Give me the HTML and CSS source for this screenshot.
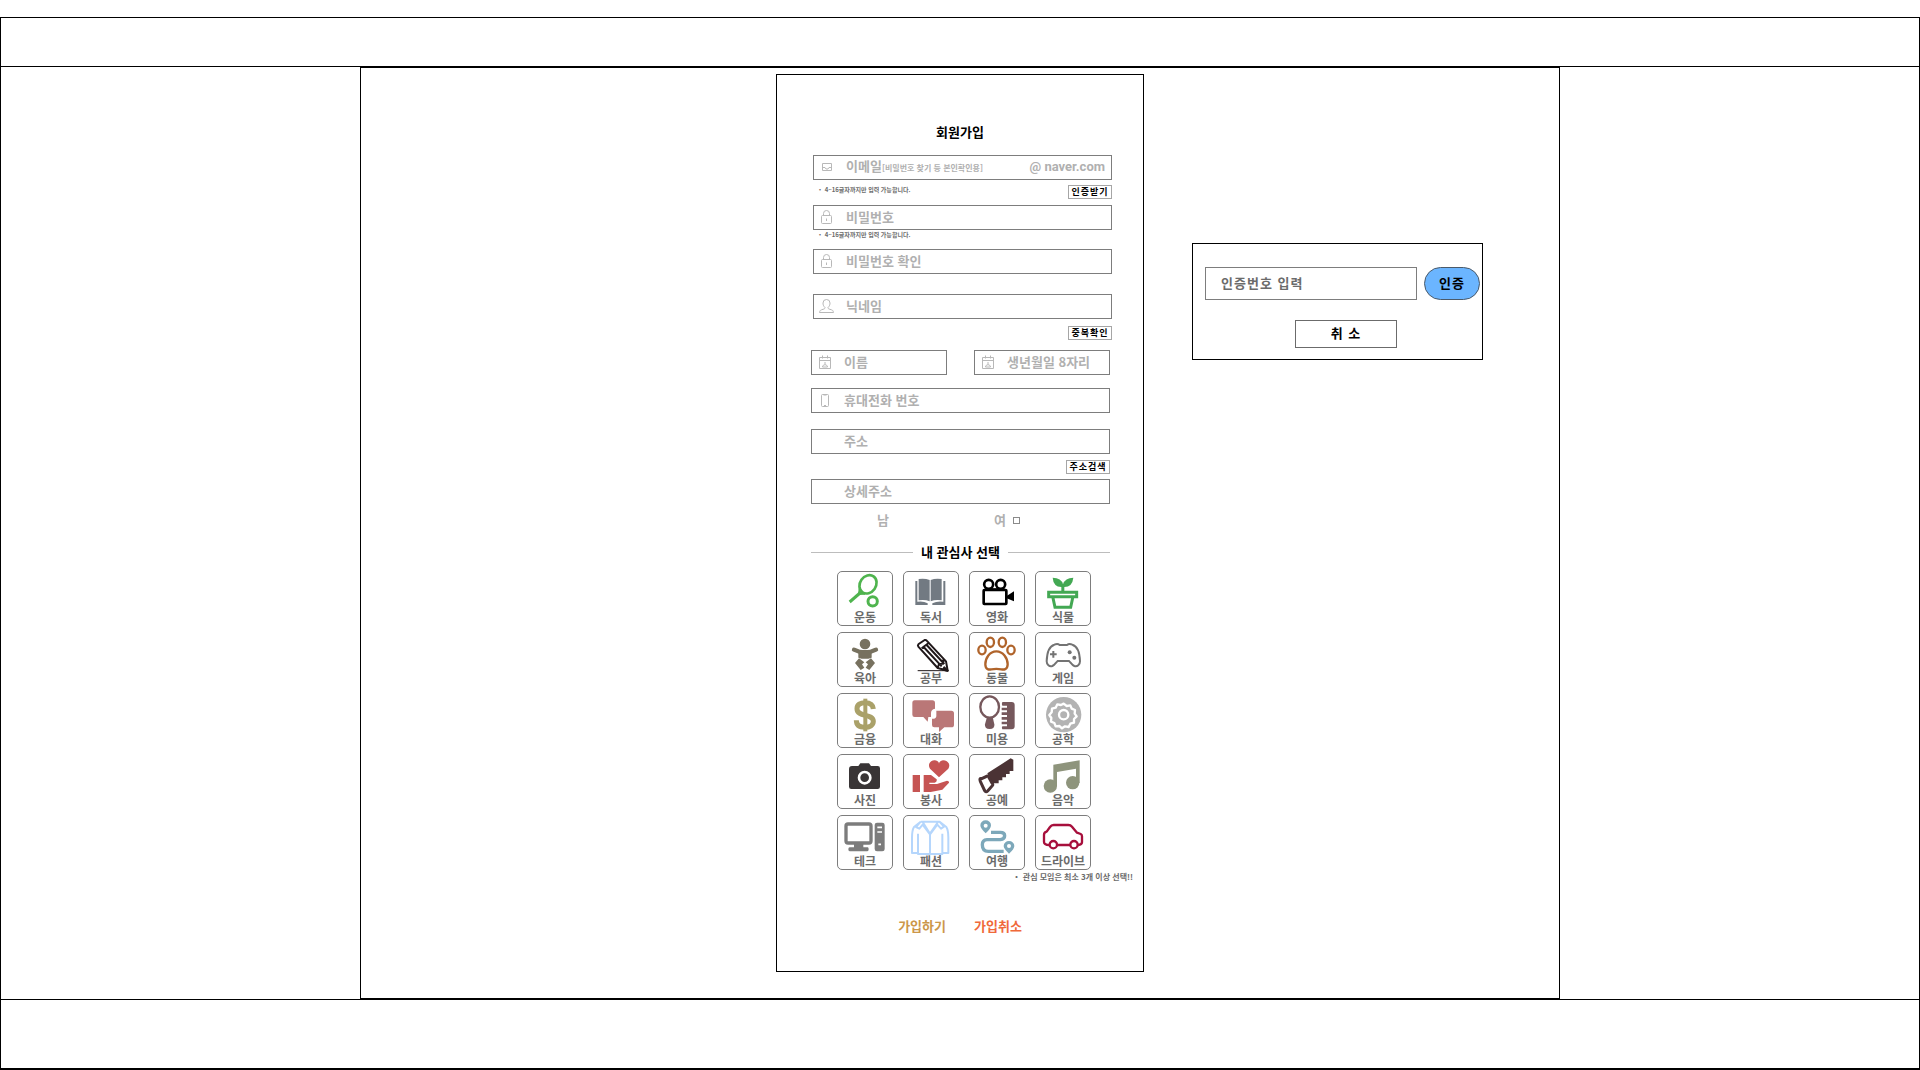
FILE: index.html
```html
<!DOCTYPE html>
<html lang="ko">
<head>
<meta charset="utf-8">
<meta name="viewport" content="width=device-width, initial-scale=1">
<title>회원가입</title>
<link rel="stylesheet" href="styles.css">
</head>
<body>
<div class="frame">
  <header class="site-header"></header>
  <main class="site-main">
    <form class="signup">
      <h1 class="title">회원가입</h1>

      <div class="group group-account">
        <div class="field">
          <svg class="field-icon" viewBox="0 0 16 16"><path d="M3.500 4.500h9v7h-9zM3.500 8.500h2.500l1 1.500h2l1-1.500h2.500"/></svg>
          <label class="field-label" for="email">이메일<small>[비밀번호 찾기 등 본인확인용]</small></label>
          <input id="email" type="text">
          <span class="domain">@ naver.com</span>
        </div>
        <div class="row row-action">
          <p class="note">・ 4~16글자까지만 입력 가능합니다.</p>
          <button class="mini" type="button">인증받기</button>
        </div>
        <div class="field">
          <svg class="field-icon" viewBox="0 0 16 16"><path d="M3.500 6.500q-1 0-1 1v6q0 1 1 1h8q1 0 1-1v-6q0-1-1-1zM4.500 6.500v-2a3 3 0 0 1 6 0v2M7.500 9.500v2.500"/></svg>
          <input type="password" aria-label="비밀번호" placeholder="비밀번호">
        </div>
        <p class="note note-password">・ 4~16글자까지만 입력 가능합니다.</p>
        <div class="field">
          <svg class="field-icon" viewBox="0 0 16 16"><path d="M3.500 6.500q-1 0-1 1v6q0 1 1 1h8q1 0 1-1v-6q0-1-1-1zM4.500 6.500v-2a3 3 0 0 1 6 0v2M7.500 9.500v2.500"/></svg>
          <input type="password" aria-label="비밀번호 확인" placeholder="비밀번호 확인">
        </div>
        <div class="field field-nickname">
          <svg class="field-icon" viewBox="0 0 16 16"><path d="M6 9.500C4.300 8 4 6.500 4 5a3.500 3.500 0 0 1 7 0c0 1.500-.3 3-2 4.500 0 1.500 1 1.500 3.500 2.300 1.500.5 1.700 1.200 2 2.700h-14c.3-1.500.5-2.200 2-2.700C5 11 6 11 6 9.500z"/></svg>
          <input type="text" aria-label="닉네임" placeholder="닉네임">
        </div>
        <div class="row row-check">
          <button class="mini" type="button">중복확인</button>
        </div>
      </div>

      <div class="group group-profile">
        <div class="row row-pair">
          <div class="field">
            <svg class="field-icon" viewBox="0 0 16 16"><path d="M2.500 3.500h11v11h-11zM2.500 6.500h11M5.500 1.500v3M10.500 1.500v3M5.500 13c0-3 5-3 5 0zM8 8v2.500"/></svg>
            <input type="text" aria-label="이름" placeholder="이름">
          </div>
          <div class="field">
            <svg class="field-icon" viewBox="0 0 16 16"><path d="M2.500 3.500h11v11h-11zM2.500 6.500h11M5.500 1.500v3M10.500 1.500v3M5.500 13c0-3 5-3 5 0zM8 8v2.500"/></svg>
            <input type="text" aria-label="생년월일 8자리" placeholder="생년월일 8자리">
          </div>
        </div>
        <div class="field">
          <svg class="field-icon" viewBox="0 0 16 16"><path d="M5.500 2.500h5q1 0 1 1v10q0 1-1 1h-5q-1 0-1-1v-10q0-1 1-1zM6.500 3h3M7 13.500h2"/></svg>
          <input type="tel" aria-label="휴대전화 번호" placeholder="휴대전화 번호">
        </div>
        <div class="field field-address">
          <span class="field-icon"></span>
          <input type="text" aria-label="주소" placeholder="주소">
        </div>
        <div class="row row-search">
          <button class="mini" type="button">주소검색</button>
        </div>
        <div class="field">
          <span class="field-icon"></span>
          <input type="text" aria-label="상세주소" placeholder="상세주소">
        </div>
        <div class="row row-gender">
          <span>남</span>
          <label class="gender" for="female">여<input id="female" type="checkbox"></label>
        </div>
        <h2 class="divider">내 관심사 선택</h2>
      </div>

      <div class="interests">
        <button class="tile" type="button">
          <svg viewBox="60 37 162 111" fill="none" stroke="#4fb44e" stroke-width="8"><ellipse cx="150" cy="74" rx="24" ry="29" transform="rotate(35 150 74)"/><path d="M126 88l-2 14 17-1" fill="#4fb44e"/><path d="M126 100l-31 27" stroke-width="9"/><circle cx="164" cy="125" r="14" stroke-width="9"/></svg>
          <span>운동</span>
        </button>
        <button class="tile" type="button">
          <svg viewBox="253 37 162 111" fill="#727a82"><path d="M297 58q18-3 33 3v64q-14-6-33-3zM333 61q14-6 33-3v64q-19-3-33 3zM287 64h6v62q18-3 31 5v5h-37zM377 64h-6v62q-18-3-33 5v5h39z"/></svg>
          <span>독서</span>
        </button>
        <button class="tile" type="button">
          <svg viewBox="448 37 162 111" fill="none" stroke="#000" stroke-width="8"><circle cx="504" cy="74" r="13.500"/><circle cx="540" cy="74" r="13.500"/><rect x="489" y="91" width="68" height="42" rx="2"/><path d="M504 88h36" stroke-width="5"/><path d="M558 109l22-14v30l-22-9z" fill="#000" stroke="none"/></svg>
          <span>영화</span>
        </button>
        <button class="tile" type="button">
          <svg viewBox="652 37 162 111" fill="#43a853"><path d="M702 54q26 0 31 20 6-20 31-20-3 28-27 28v13h-9V82q-24-1-26-28z"/><path d="M690 98h84v13h-84zM703 115l6 28h47l6-28" fill="none" stroke="#43a853" stroke-width="9"/></svg>
          <span>식물</span>
        </button>

        <button class="tile" type="button">
          <svg viewBox="55 217 162 111" fill="#77715f"><circle cx="136" cy="250" r="16"/><path d="M103 267q33 17 66 0" fill="none" stroke="#77715f" stroke-width="13" stroke-linecap="round"/><path d="M116 268h40v23q-20 7-40 0zM118 293l16 12-7 6 7 10-11 7-17-21zM154 293l-16 12 7 6-7 10 11 7 17-21z"/></svg>
          <span>육아</span>
        </button>
        <button class="tile" type="button">
          <svg viewBox="253 217 162 111" fill="none" stroke="#20181a" stroke-width="6" stroke-linejoin="round"><path d="M297 250l18-12q4-1 6 2l58 62 5 28-30-8-58-64q-3-4 1-8zM306 263l22-17M312 259l54 58M321 253l53 57M354 322l4-12 11-1 2-12 8 5" /><path d="M374 320l10 10-14-3z" fill="#20181a"/><path d="M294 330h92" stroke-width="3"/></svg>
          <span>공부</span>
        </button>
        <button class="tile" type="button">
          <svg viewBox="448 217 162 111" fill="none" stroke="#b0642b" stroke-width="7"><ellipse cx="484" cy="268" rx="11" ry="13"/><ellipse cx="509" cy="245" rx="11" ry="14"/><ellipse cx="545" cy="245" rx="11" ry="14"/><ellipse cx="571" cy="268" rx="11" ry="13"/><path d="M527 272c-20 0-33 20-33 39 0 17 12 16 18 15 11-2 19-2 30 0 6 1 19 2 19-15 0-19-14-39-34-39z"/></svg>
          <span>동물</span>
        </button>
        <button class="tile" type="button">
          <svg viewBox="652 217 162 111" fill="none" stroke="#737373" stroke-width="6"><path d="M707 252q10-4 16 1h22q6-5 16-1c15 4 22 22 23 50 0 10-8 17-17 14-9-4-10-10-16-15h-34c-6 5-7 11-16 15-9 3-17-4-17-14 1-28 8-46 23-50z"/><path d="M704 271v20M694 281h20"/><g fill="#737373" stroke="none"><circle cx="753" cy="275" r="6"/><circle cx="767" cy="291" r="6"/></g></svg>
          <span>게임</span>
        </button>

        <button class="tile" type="button">
          <svg viewBox="52 25 162 111" fill="none" stroke="#aaa169"><path d="M158 70c-1-14-12-19-25-19-14 0-24 6-24 18 0 27 49 13 49 38 0 12-11 18-25 18-15 0-26-6-26-21" stroke-width="15"/><path d="M134 39v98" stroke-width="12"/></svg>
          <span>금융</span>
        </button>
        <button class="tile" type="button">
          <svg viewBox="250 25 162 111" fill="#ba7777"><path d="M282 44h53q8 0 8 8v17q-12 2-12 13v12h-8l-2 14-13-14h-26q-7 0-7-7V52q0-8 7-8z"/><path d="M352 75h40q8 0 8 8v34q0 8-8 8h-21l-16 14v-14h-14q-7 0-7-7V99h5q8-1 8-9V75z"/></svg>
          <span>대화</span>
        </button>
        <button class="tile" type="button">
          <svg viewBox="446 25 162 111" fill="#76585c"><ellipse cx="505" cy="64" rx="28" ry="32" fill="none" stroke="#76585c" stroke-width="7"/><path d="M497 94h17l5 22q2 14-14 14t-14-14z"/><path d="M543 49h28q9 0 9 9v64q0 9-9 9h-28q-3-4 0-9h14v-6h-16v-8h16v-6h-16v-8h16v-6h-16v-8h16v-6h-16v-8h16v-6h-14q-3-5 0-11z"/></svg>
          <span>미용</span>
        </button>
        <button class="tile" type="button">
          <svg viewBox="649 25 162 111" fill="none" stroke="#fff" stroke-width="7"><circle cx="732" cy="87" r="53" fill="#b3b3b3" stroke="none"/><path d="M732 54l9 7 11-2 4 10 10 4-1 11 6 8-8 8 0 11-11 3-5 10-11-2-9 6-8-7-11 1-4-10-10-4 1-11-6-9 7-8 1-11 11-3 5-10 11 2z" stroke-linejoin="round"/><circle cx="732" cy="87" r="14"/></svg>
          <span>공학</span>
        </button>

        <button class="tile" type="button">
          <svg viewBox="52 207 162 111"><path d="M94 240h19l6-8h26l6 8h20q7 0 7 7v55q0 7-7 7H92q-7 0-7-7v-52q0-10 9-10z" fill="#393536"/><circle cx="132" cy="275" r="17" fill="none" stroke="#fff" stroke-width="8"/></svg>
          <span>사진</span>
        </button>
        <button class="tile" type="button">
          <svg viewBox="250 207 162 111" fill="#c65453"><path d="M355 274l-27-26c-9-14 3-26 15-25 8 1 12 6 12 10 0-4 5-9 12-10 14 0 24 12 16 25zM276 267h22v51h-22zM309 267h22l17 13q2 8-6 10h-16v4h23l30-10q7 0 6 6l-20 21-35 7h-21z"/></svg>
          <span>봉사</span>
        </button>
        <button class="tile" type="button">
          <svg viewBox="446 207 162 111" fill="#4b3335"><path d="M498 262l70-45 8 4v34h-11v9h-11v10h-11v9h-11v9h-20z"/><path d="M481 278q-8-2-4 8l13 28q4 6 9 1l14-16q3-4-1-8l-10-18q-3-5-8-1z" fill="none" stroke="#4b3335" stroke-width="9"/></svg>
          <span>공예</span>
        </button>
        <button class="tile" type="button">
          <svg viewBox="649 207 162 111" fill="#8e947c"><path d="M701 236l79-13v68h-11v-43l-57 10v43h-11z"/><circle cx="692" cy="300" r="20"/><circle cx="759" cy="290" r="20"/></svg>
          <span>음악</span>
        </button>

        <button class="tile" type="button">
          <svg viewBox="202 25 162 111" fill="#7c7c7c"><rect x="226" y="49" width="75" height="57" rx="6" fill="none" stroke="#7c7c7c" stroke-width="10"/><path d="M250 108h28v11h13q3 0 3 6t-4 6h-53q-4 0-4-6t4-6h13z"/><path d="M319 45h16q7 0 7 7v72q0 7-7 7h-16q-7 0-7-7V52q0-7 7-7z"/><path d="M320 59h14M320 73h14M323 110h8" stroke="#fff" stroke-width="5"/></svg>
          <span>테크</span>
        </button>
        <button class="tile" type="button">
          <svg viewBox="401 25 162 111" fill="none" stroke="#b5d6fc" stroke-width="6" stroke-linejoin="round"><path d="M451 42h57l20 16q6 10 6 32v46h-15M451 42l-20 16q-6 10-6 32v46h18M443 78v61h73V78M451 42l-14 16 10 5 10-12 22 29 22-29 11 12 9-6-14-15M457 43l22 35 24-35M479 80v58"/></svg>
          <span>패션</span>
        </button>
        <button class="tile" type="button">
          <svg viewBox="595 25 162 111" fill="none" stroke="#7da8ba" stroke-width="10"><path d="M658 74h28q13 0 13 10t-13 12h-40q-14 1-14 15c0 13 7 20 18 20h46"/><path d="M642 77q-16-15-16-24a16 15 0 0 1 32 0q0 10-16 24zM712 138q-16-15-16-23a16 15 0 0 1 32 0q0 9-16 23z" fill="#7da8ba" stroke="none"/><circle cx="642" cy="54" r="6" fill="#fff" stroke="none"/><circle cx="712" cy="115" r="6" fill="#fff" stroke="none"/></svg>
          <span>여행</span>
        </button>
        <button class="tile" type="button">
          <svg viewBox="799 25 162 111" fill="none" stroke="#a70f3c" stroke-width="7" stroke-linejoin="round"><path d="M839 112q-16 0-16-9V81q0-7 8-9l10-14q4-6 11-6h44q7 0 11 5l15 18 11 4q4 2 4 7v18q0 7-12 8M862 112h40"/><circle cx="851" cy="111" r="11"/><circle cx="913" cy="111" r="11"/></svg>
          <span>드라이브</span>
        </button>
      </div>

      <p class="note note-interests">・ 관심 모임은 최소 3개 이상 선택!!</p>

      <div class="submit-row">
        <button class="text-button join" type="submit">가입하기</button>
        <button class="text-button leave" type="button">가입취소</button>
      </div>
    </form>

    <form class="verify">
      <div class="verify-row">
        <input type="text" aria-label="인증번호 입력" placeholder="인증번호 입력">
        <button class="confirm" type="button">인증</button>
      </div>
      <button class="cancel" type="button">취 소</button>
    </form>
  </main>
  <footer class="site-footer"></footer>
</div>
</body>
</html>
```
FILE: styles.css
```css
* {
  box-sizing: border-box;
}

body {
  margin: 0;
  padding-top: 17px;
  background: #fff;
  color: #000;
  font: 700 13px/20px "Noto Sans CJK KR", sans-serif;
}

h1,
h2,
p {
  margin: 0;
  font: inherit;
}

button,
input {
  margin: 0;
  padding: 0;
  border: 0;
  border-radius: 0;
  background: none;
  color: inherit;
  font: inherit;
  letter-spacing: inherit;
}

button {
  cursor: pointer;
}

/* Page frame */

.frame {
  border: 1px solid #000;
  border-bottom-width: 2px;
}

.site-header {
  height: 49px;
  border-bottom: 1px solid #000;
}

.site-main {
  display: grid;
  grid-template-columns: 1fr 368px 1fr;
  align-items: start;
  max-width: 1200px;
  margin: 0 auto;
  padding: 6px 0 26px;
  border: 1px solid #000;
}

.site-footer {
  height: 69px;
  border-top: 1px solid #000;
}

/* Sign-up card */

.signup {
  grid-column: 2;
  padding: 47px 0 35px;
  border: 1px solid #000;
}

.title {
  padding-bottom: 13px;
  text-align: center;
}

.group {
  display: flex;
  flex-direction: column;
  width: 299px;
}

.group-account {
  margin-left: 36px;
}

.group-profile {
  margin-left: 34px;
}

.field {
  display: flex;
  align-items: center;
  height: 25px;
  padding: 0 6px 1px 5px;
  border: 1px solid #7d7d7d;
  color: #b0b0b0;
}

.field-icon {
  flex: none;
  width: 16px;
  height: 16px;
  margin-right: 11px;
  fill: none;
  stroke: #b8b8b8;
}

.field input {
  flex: 1;
  min-width: 0;
  outline: none;
}

::placeholder {
  color: inherit;
  opacity: 1;
}

.field-label small {
  font-size: 8px;
}

.domain {
  font-family: Roboto, sans-serif;
}

.row {
  display: flex;
}

.row-action {
  justify-content: space-between;
  padding: 5px 0 6px;
}

.row-check {
  justify-content: flex-end;
  padding: 7px 0 10px;
}

.row-search {
  justify-content: flex-end;
  padding: 6px 0 5px;
}

.row-pair {
  gap: 27px;
  padding-bottom: 13px;
}

.row-pair .field {
  flex: 1;
  min-width: 0;
}

.row-gender {
  gap: 105px;
  padding: 6px 0 12px 66px;
  color: #b0b0b0;
}

.field-nickname {
  margin-top: 20px;
}

.field-address {
  margin-top: 16px;
}

.note {
  padding-left: 4px;
  color: #6b6b6b;
  font-size: 6px;
  line-height: 10px;
}

.note-password {
  padding-bottom: 9px;
}

.mini {
  width: 44px;
  height: 14px;
  border: 1px solid #a6a6a6;
  font-size: 9px;
  line-height: 12px;
  letter-spacing: 1px;
}

.gender {
  display: flex;
  align-items: center;
  gap: 7px;
}

.gender input {
  appearance: none;
  width: 7px;
  height: 7px;
  border: 1px solid #8a8a8a;
}

.divider {
  display: flex;
  align-items: center;
  gap: 8px;
}

.divider::before,
.divider::after {
  content: "";
  flex: 1;
  border-top: 1px solid #bdbdbd;
}

/* Interest tiles */

.interests {
  display: grid;
  grid-template-columns: repeat(4, 56px);
  gap: 6px 10px;
  justify-content: center;
  margin: 9px 0 0 8px;
}

.tile {
  display: flex;
  flex-direction: column;
  align-items: center;
  height: 55px;
  border: 1px solid #7d7d7d;
  border-radius: 5px;
  color: #6b6b6b;
  font-size: 12px;
  line-height: 15px;
  white-space: nowrap;
}

.tile svg {
  flex: none;
  width: 54px;
  height: 37px;
  overflow: visible;
}

.note-interests {
  padding: 2px 10px 0 0;
  font-size: 8px;
  text-align: right;
}

.submit-row {
  display: flex;
  justify-content: center;
  gap: 28px;
  padding-top: 34px;
}

.text-button {
  line-height: 20px;
}

.join {
  color: #cc974a;
}

.leave {
  color: #f0693a;
}

/* Verification dialog */

.verify {
  grid-column: 3;
  width: 291px;
  margin: 169px 0 0 48px;
  padding: 23px 2px 11px 12px;
  border: 1px solid #000;
  letter-spacing: 1px;
}

.verify-row {
  display: flex;
  gap: 7px;
}

.verify-row input {
  flex: 1;
  min-width: 0;
  height: 33px;
  padding: 0 0 2px 15px;
  border: 1px solid #7d7d7d;
  color: #6b6b6b;
}

.confirm {
  width: 56px;
  height: 33px;
  padding-bottom: 2px;
  border: 1px solid #4a5a6a;
  border-radius: 17px;
  background: #6bb5ff;
}

.cancel {
  display: block;
  width: 102px;
  height: 28px;
  padding-bottom: 2px;
  margin: 20px 0 0 90px;
  border: 1px solid #6b6b6b;
}
```
